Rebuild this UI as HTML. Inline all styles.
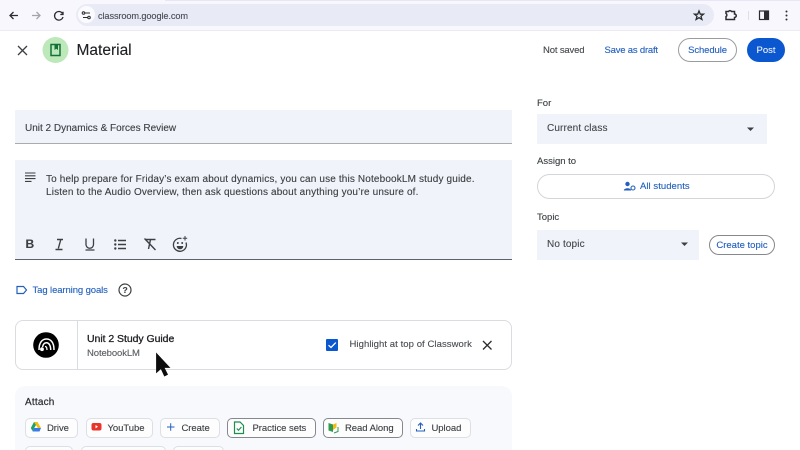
<!DOCTYPE html>
<html><head><meta charset="utf-8">
<style>
html,body{margin:0;padding:0;width:800px;height:450px;overflow:hidden;background:#fff}
body{position:relative;font-family:"Liberation Sans",sans-serif;color:#3c4043}
#w{position:absolute;left:0;top:0;width:800px;height:450px;overflow:hidden;filter:blur(.3px);-webkit-text-stroke:.12px currentColor}
.a{position:absolute;white-space:nowrap}
.t{position:absolute;white-space:nowrap;line-height:14px}
.blue{color:#2360bd}
.btn{position:absolute;box-sizing:border-box;height:20px;border:1px solid #dcdfe3;border-radius:5px;background:#fdfdfe;font-size:9.500px;line-height:19px;color:#3c4043;white-space:nowrap;letter-spacing:-.05px}
.btn.d{border-color:#85888c}
.btn span{position:absolute;top:0}
svg{position:absolute;overflow:visible;-webkit-text-stroke:0}
</style></head><body><div id="w">
<!-- browser chrome -->
<div class="a" style="left:0;top:0;width:800px;height:30px;background:#f8f7fd"></div>
<div class="a" style="left:165px;top:0;width:635px;height:1px;background:#e6e6f6"></div>
<div class="a" style="left:0;top:30px;width:800px;height:1px;background:#eceaf2"></div>
<div class="a" style="left:76px;top:4px;width:638px;height:22px;border-radius:11px;background:#e8eaf5"></div>
<div class="a" style="left:78px;top:6px;width:17px;height:17px;border-radius:50%;background:#fbfbfe"></div>
<svg style="left:0;top:0" width="800" height="30" fill="none" stroke="#2b2c30" stroke-width="1.300">
<path d="M18 15.500H10M13.500 12L10 15.500L13.500 19"/>
<path d="M32 15.500H40M36.500 12L40 15.500L36.500 19" stroke="#a4a5ac"/>
<path d="M62.500 13.500A4.300 4.300 0 1 0 63 17M63 11.800V14.500H60.300"/>
<path d="M83 13H90M83 17.500H90" stroke-width="1"/>
<circle cx="83.500" cy="13" r="1.300" fill="#e8eaf5" stroke-width="1"/><circle cx="89" cy="17.500" r="1.300" fill="#e8eaf5" stroke-width="1"/>
<path d="M699 11L700.300 14.200H703.500L701 16.300L701.900 19.500L699 17.700L696.100 19.500L697 16.300L694.500 14.200H697.700Z" stroke-width="1.300"/>
<path d="M726 11.500H728.500A1.700 1.700 0 0 1 731.500 11.500H734.500V14A1.600 1.600 0 0 1 734.500 17.500V19.500H726V16.500A1.700 1.700 0 0 0 726 13.500Z" stroke-width="1.500"/>
<rect x="759.500" y="11" width="9" height="8.500" stroke-width="1.200"/>
<rect x="764" y="11" width="4.500" height="8.500" fill="#2b2c30" stroke="none"/>
<circle cx="786.500" cy="11.500" r="1" fill="#2b2c30" stroke="none"/><circle cx="786.500" cy="15.500" r="1" fill="#2b2c30" stroke="none"/><circle cx="786.500" cy="19.500" r="1" fill="#2b2c30" stroke="none"/>
</svg>
<div class="a" style="left:748px;top:11px;width:1px;height:9px;background:#dfdfe8"></div>
<div class="t" style="left:98px;top:8.500px;font-size:9.200px;color:#4a4c55;letter-spacing:-.1px">classroom.google.com</div>

<!-- header -->
<svg style="left:0;top:0" width="100" height="70" fill="none" stroke="#3c4043" stroke-width="1.300">
<path d="M18 46L27 55M27 46L18 55"/>
<circle cx="55.500" cy="50" r="13" fill="#bde8b9" stroke="none"/>
<rect x="51" y="44.500" width="9" height="11" fill="#bde8b9" stroke="#15703a" stroke-width="1.500"/>
<path d="M54.500 44.500H58V50L56.200 48.800L54.500 50Z" fill="#15703a" stroke="none"/>
</svg>
<div class="t" style="left:76.500px;top:41px;font-size:15.500px;line-height:20px;color:#202124">Material</div>
<div class="t" style="left:543px;top:43.500px;font-size:9.500px;letter-spacing:-.15px;color:#44474a">Not saved</div>
<div class="t blue" style="left:604.500px;top:43.500px;font-size:9.500px;letter-spacing:-.2px">Save as draft</div>
<div class="a" style="left:678px;top:38px;width:59px;height:24px;box-sizing:border-box;border:1px solid #9a9da0;border-radius:12px;text-align:center;font-size:9.500px;line-height:23px;letter-spacing:-.1px;color:#2360bd">Schedule</div>
<div class="a" style="left:747px;top:38px;width:38px;height:24px;border-radius:12px;background:#0b57d0;text-align:center;font-size:9.500px;line-height:25px;color:#eef2fb">Post</div>

<!-- title -->
<div class="a" style="left:15px;top:110px;width:497px;height:33px;background:#f0f4fa;border-bottom:1.500px solid #a9abad"></div>
<div class="t" style="left:25px;top:121.500px;font-size:10px;color:#3c4043">Unit 2 Dynamics &amp; Forces Review</div>

<!-- description -->
<div class="a" style="left:15px;top:160px;width:497px;height:99px;background:#f0f4fa;border-bottom:1px solid #5f6368"></div>
<svg style="left:0;top:160px" width="60" height="30" stroke="#3c4043" stroke-width="1.100" fill="none">
<path d="M25 13H35.500M25 15.800H35.500M25 18.600H35.500M25 21.400H31.500"/>
</svg>
<div class="t" style="left:46px;top:172.500px;font-size:10px;line-height:13.500px;color:#3c4043;letter-spacing:.145px">To help prepare for Friday’s exam about dynamics, you can use this NotebookLM study guide.<br>Listen to the Audio Overview, then ask questions about anything you’re unsure of.</div>

<!-- toolbar -->
<div class="t" style="left:25.500px;top:237px;font-size:12px;font-weight:bold;color:#3c4043">B</div>
<svg style="left:0;top:230px" width="200" height="30" fill="none" stroke="#3c4043" stroke-width="1.300">
<path d="M57 9.500H63M60.800 9.500L58.300 18.500M55.500 19.500H62.500" stroke-width="1.400"/>
<path d="M86 8.500V14.500A3.700 3.700 0 0 0 93.500 14.500V8.500M85.500 20H94.500"/>
<path d="M118 10.500H126M118 14.500H126M118 18.500H126" stroke-width="1.400"/>
<circle cx="115.300" cy="10.500" r="1.200" fill="#3c4043" stroke="none"/><circle cx="115.300" cy="14.500" r="1.200" fill="#3c4043" stroke="none"/><circle cx="115.300" cy="18.500" r="1.200" fill="#3c4043" stroke="none"/>
<path d="M145 9.500H155.500M150.500 9.500L148.500 19M144.500 8.500L155.500 20" stroke-width="1.400"/>
<path d="M186 12.500A6.500 6.500 0 1 1 181.500 8.500" stroke-width="1.300"/>
<path d="M185 6V10.500M182.800 8.200H187.200" stroke-width="1"/>
<path d="M176.700 16A3.300 3.300 0 0 0 183.300 16Z" fill="#3c4043" stroke="none"/>
<circle cx="177.800" cy="13" r="1" fill="#3c4043" stroke="none"/><circle cx="182.200" cy="13" r="1" fill="#3c4043" stroke="none"/>
</svg>

<!-- tag learning goals -->
<svg style="left:0;top:280px" width="140" height="20" fill="none">
<path d="M17 6.500H23.500L26.500 10L23.500 13.500H17Z" stroke="#2360bd" stroke-width="1.200"/>
<circle cx="125" cy="10" r="6" stroke="#3c4043" stroke-width="1.200"/>
</svg>
<div class="t" style="left:122.500px;top:284px;font-size:8.500px;line-height:12px;font-weight:bold;color:#3c4043">?</div>
<div class="t blue" style="left:32.500px;top:283.500px;font-size:9.500px;letter-spacing:-.1px">Tag learning goals</div>

<!-- attachment card -->
<div class="a" style="left:15px;top:320px;width:497px;height:50px;box-sizing:border-box;border:1px solid #dadce0;border-radius:8px;background:#fff"></div>
<div class="a" style="left:77px;top:321px;width:1px;height:48px;background:#dadce0"></div>
<svg style="left:33px;top:332px" width="26" height="26" fill="none" stroke="#fff" stroke-width="1.500">
<circle cx="13" cy="13" r="12.800" fill="#000" stroke="none"/>
<path d="M6 18C6 10 9.500 7 13.500 7C17.500 7 21 10 21 18"/>
<path d="M9.500 15C10 12.500 11.500 10.800 13.500 10.800C16 10.800 17.700 13.500 17.700 18"/>
<path d="M14 18C14 16 13.500 14.500 12 14.500" stroke-width="1.300"/>
<circle cx="9" cy="17.200" r="1.900" fill="#fff" stroke="none"/>
</svg>
<div class="t" style="left:87px;top:332px;font-size:10.500px;color:#202124;letter-spacing:-.05px;-webkit-text-stroke:.3px #202124">Unit 2 Study Guide</div>
<div class="t" style="left:87px;top:347px;font-size:9.500px;letter-spacing:-.1px;color:#5a5d61">NotebookLM</div>
<svg style="left:150px;top:350px" width="24" height="30">
<path d="M6.500 3.500V22.500L11 18.500L14.500 26L17.500 24.500L14 17.500H19.500Z" fill="#0d0d0d" stroke="#0d0d0d" stroke-width=".8"/>
</svg>
<div class="a" style="left:326px;top:339px;width:12px;height:12px;background:#0b57d0;border-radius:1px"></div>
<svg style="left:326px;top:339px" width="12" height="12" fill="none"><path d="M2.500 6.200L5 8.500L9.800 3.600" stroke="#fff" stroke-width="1.300"/></svg>
<div class="t" style="left:349.500px;top:338px;font-size:9.500px;color:#4a4d51;letter-spacing:.07px">Highlight at top of Classwork</div>
<svg style="left:480px;top:338px" width="14" height="14" fill="none" stroke="#2b2c30" stroke-width="1.300"><path d="M3 3L11.500 11.500M11.500 3L3 11.500"/></svg>

<!-- attach -->
<div class="a" style="left:15px;top:386px;width:497px;height:64px;background:#f8f9fd;border-radius:10px 10px 0 0"></div>
<div class="t" style="left:25px;top:396px;font-size:10px;color:#2b2d30;letter-spacing:.2px;-webkit-text-stroke:.2px #2b2d30">Attach</div>

<div class="btn" style="left:25px;top:417.500px;width:53px"><span style="left:21px">Drive</span></div>
<svg style="left:30px;top:421px" width="12" height="12"><path d="M4 1H7.500L11 7H7.800Z" fill="#f5bc16"/><path d="M4 1L.8 7L2.500 10L6 4Z" fill="#1ea362"/><path d="M4 7H11L9.500 10.500H2.500Z" fill="#3a7be8"/></svg>
<div class="btn" style="left:85.500px;top:417.500px;width:67px"><span style="left:21px">YouTube</span></div>
<svg style="left:91px;top:422px" width="11" height="10"><rect x="0.500" y="1" width="10" height="7.500" rx="2" fill="#e8342a"/><path d="M4.500 3L7 4.700L4.500 6.400Z" fill="#fff"/></svg>
<div class="btn" style="left:160px;top:417.500px;width:60px"><span style="left:20.500px">Create</span></div>
<svg style="left:166px;top:422px" width="10" height="10" stroke="#2360bd" stroke-width="1"><path d="M1 5H8.500M4.700 1.200V8.800"/></svg>
<div class="btn d" style="left:227px;top:417.500px;width:89px"><span style="left:24.500px">Practice sets</span></div>
<svg style="left:233px;top:421px" width="12" height="14" fill="none" stroke="#1e8e4e" stroke-width="1.200"><path d="M1.500 1H7L10.500 4.500V12.500H1.500Z"/><path d="M3.800 7.500L5.500 9.300L8.400 6" stroke-width="1.100"/></svg>
<div class="btn d" style="left:323px;top:417.500px;width:80px"><span style="left:21px">Read Along</span></div>
<svg style="left:328px;top:422px" width="13" height="12"><path d="M0.500 1L5 2.500V10L0.500 8.500Z" fill="#2e9b4f"/><path d="M5 2.500L8.500 1V5.500L5 8Z" fill="#f2bb1a"/><path d="M10 5V9.500L6 11" stroke="#2e9b4f" fill="none" stroke-width="1"/></svg>
<div class="btn" style="left:409.500px;top:417.500px;width:61px"><span style="left:21px">Upload</span></div>
<svg style="left:415px;top:421px" width="11" height="12" fill="none" stroke="#2360bd" stroke-width="1.100"><path d="M5.500 8V2.500M3 4.500L5.500 2L8 4.500"/><path d="M1.500 8V10H9.500V8"/></svg>
<div class="btn" style="left:25px;top:446px;width:48px;height:20px"></div>
<div class="btn" style="left:81px;top:446px;width:85px;height:20px"></div>
<div class="btn" style="left:173px;top:446px;width:51px;height:20px"></div>

<!-- right column -->
<div class="t" style="left:537px;top:97px;font-size:9.500px;color:#3c4043">For</div>
<div class="a" style="left:537px;top:114px;width:230px;height:30px;background:#f0f4fa"></div>
<div class="t" style="left:547px;top:122px;font-size:10px;color:#44474a;letter-spacing:.13px">Current class</div>
<svg style="left:746px;top:126px" width="10" height="6"><path d="M1 1.500H8L4.500 5Z" fill="#3c4043"/></svg>
<div class="t" style="left:537px;top:154.500px;font-size:9.500px;color:#3c4043">Assign to</div>
<div class="a" style="left:537px;top:174px;width:238px;height:25px;box-sizing:border-box;border:1px solid #d3d5d8;border-radius:13px;background:#fff"></div>
<svg style="left:623px;top:181px" width="13" height="11"><circle cx="4.500" cy="3" r="2.200" fill="#2360bd"/><path d="M.800 9.500C1 6.500 8 6.500 8.200 9.500Z" fill="#2360bd"/><circle cx="10" cy="7" r="2" fill="none" stroke="#2360bd" stroke-width="1.100"/></svg>
<div class="t blue" style="left:640px;top:180px;font-size:9.500px;letter-spacing:.05px">All students</div>
<div class="t" style="left:537px;top:211px;font-size:9.500px;color:#3c4043">Topic</div>
<div class="a" style="left:537px;top:230px;width:162px;height:30px;background:#f0f4fa"></div>
<div class="t" style="left:547px;top:237.500px;font-size:10px;color:#44474a;letter-spacing:.13px">No topic</div>
<svg style="left:680px;top:241px" width="10" height="6"><path d="M1 1.500H8L4.500 5Z" fill="#3c4043"/></svg>
<div class="a" style="left:709px;top:234.500px;width:66px;height:20px;box-sizing:border-box;border:1px solid #85888c;border-radius:10px;text-align:center;font-size:9.500px;line-height:19px;color:#2360bd">Create topic</div>
</div></body></html>
